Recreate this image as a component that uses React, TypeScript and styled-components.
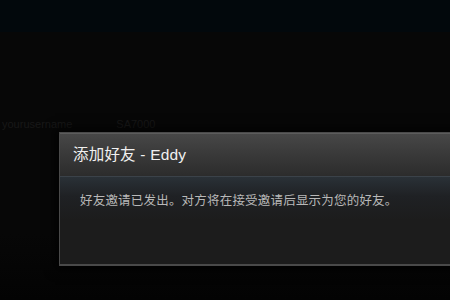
import styled, { createGlobalStyle } from 'styled-components';

const GlobalStyle = createGlobalStyle`
  html, body {
    margin: 0;
    padding: 0;
    background: #070707;
  }
  #root {
    width: 450px;
    height: 300px;
    overflow: hidden;
  }
`;

const App = () => {
  return (
    <>
      <GlobalStyle />
      <Page>
        <TopBar />
        <Main>
          <FaintRow>
            <FaintText>yourusername</FaintText>
            <FaintText>SA7000</FaintText>
          </FaintRow>
          <Dialog>
            <DialogHeader>
              <DialogTitle>添加好友 - Eddy</DialogTitle>
            </DialogHeader>
            <DialogBody>
              <Message>好友邀请已发出。对方将在接受邀请后显示为您的好友。</Message>
            </DialogBody>
          </Dialog>
        </Main>
      </Page>
    </>
  );
};

export default App;

const Page = styled.div`
  width: 450px;
  height: 300px;
  display: flex;
  flex-direction: column;
  background: #070707;
  font-family: 'Liberation Sans', 'Noto Sans CJK SC', sans-serif;
`;

const TopBar = styled.div`
  height: 32px;
  background: #02080c;
  flex-shrink: 0;
`;

const Main = styled.div`
  flex: 1;
  display: flex;
  flex-direction: column;
  padding-top: 86px;
  background: linear-gradient(to bottom, #070707 0%, #070707 75%, #030303 100%);
`;

const FaintRow = styled.div`
  display: flex;
  gap: 44px;
  height: 14px;
  padding-left: 2px;
`;

const FaintText = styled.span`
  font-size: 11px;
  line-height: 12px;
  color: #181818;
`;

const Dialog = styled.div`
  margin-left: 59px;
  width: 420px;
  display: flex;
  flex-direction: column;
  border: 1px solid #4a4a4a;
  border-right: none;
  border-bottom: 2px solid #4a4a4a;
  box-shadow: 0 0 10px 4px rgba(0, 0, 0, 0.7);
`;

const DialogHeader = styled.div`
  height: 43px;
  display: flex;
  align-items: center;
  padding: 0 0 4px 13px;
  border-top: 1px solid #5c5c5c;
  background: linear-gradient(to bottom, #474747 0%, #3a3a3a 45%, #2c2c2c 100%);
  box-sizing: border-box;
`;

const DialogTitle = styled.h2`
  margin: 0;
  font-size: 15.5px;
  font-weight: normal;
  color: #f0f0f0;
  letter-spacing: 0.2px;
`;

const DialogBody = styled.div`
  height: 88px;
  padding: 17px 0 0 20px;
  box-sizing: border-box;
  border-top: 1px solid #3b4249;
  background: linear-gradient(to bottom, #2a3137 0%, #1f2124 22%, #1c1c1c 50%, #1c1c1c 100%);
`;

const Message = styled.p`
  margin: 0;
  font-size: 12.5px;
  line-height: 14px;
  letter-spacing: 0.2px;
  color: #b8b8b8;
`;
